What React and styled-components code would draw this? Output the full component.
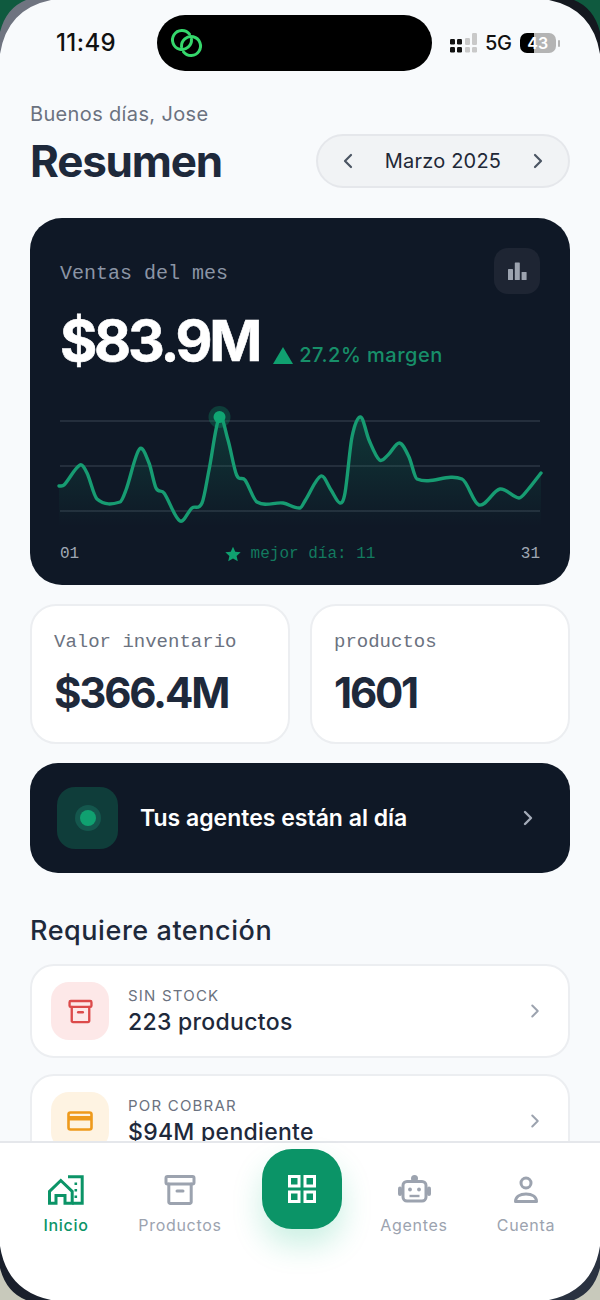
import React from 'react';
import styled, { createGlobalStyle } from 'styled-components';
import { ChevronLeft, ChevronRight } from 'lucide-react';

const SANS = '"Inter", "Liberation Sans", sans-serif';
const MONO = '"Liberation Mono", "DejaVu Sans Mono", monospace';

const GlobalStyle = createGlobalStyle`
  html, body {
    margin: 0;
    padding: 0;
    background: #f8fafc;
  }
  * {
    box-sizing: border-box;
  }
`;

const Phone = styled.div`
  position: relative;
  width: 600px;
  height: 1300px;
  overflow: hidden;
  display: flex;
  flex-direction: column;
  background: #f8fafc;
  font-family: ${SANS};
  color: #1e293b;
`;

const CornerSvg = styled.svg`
  position: absolute;
  width: 60px;
  height: 60px;
  z-index: 5;
  ${(p) => (p.$bottom ? 'bottom: 0;' : 'top: 0;')}
  ${(p) => (p.$right ? 'right: 0;' : 'left: 0;')}
  transform: scale(${(p) => (p.$right ? -1 : 1)}, ${(p) => (p.$bottom ? -1 : 1)});
`;

const Corner = ({ bottom, right, ring, outer }) => (
  <CornerSvg $bottom={bottom} $right={right} viewBox="0 0 60 60">
    <path d="M0 54 Q7 9 51 0 L0 0 Z" fill={ring} />
    <path d="M0 32 Q6 8 26 0 L0 0 Z" fill={outer} />
  </CornerSvg>
);

const StatusBar = styled.div`
  height: 86px;
  flex: none;
  padding: 15px 0 0 56px;
  display: flex;
  align-items: flex-start;
`;

const Time = styled.div`
  width: 101px;
  height: 56px;
  line-height: 56px;
  font-size: 24px;
  font-weight: 500;
  color: #111;
  letter-spacing: 0.4px;
`;

const Island = styled.div`
  width: 275px;
  height: 56px;
  border-radius: 28px;
  background: #000;
  display: flex;
  align-items: center;
  padding-left: 12px;
`;

const StatusIcons = styled.div`
  margin-left: 18px;
  height: 56px;
  display: flex;
  align-items: center;
  gap: 7px;
`;

const Network = styled.span`
  font-size: 20px;
  font-weight: 500;
  color: #111;
  letter-spacing: -0.3px;
`;

const Battery = styled.div`
  position: relative;
  width: 36px;
  height: 20px;
  border-radius: 7px;
  overflow: hidden;
  margin-left: 1px;
  background: linear-gradient(90deg, #000 0 40%, #b4b4b4 40% 100%);
  color: #fff;
  font-size: 16px;
  font-weight: 600;
  line-height: 20px;
  text-align: center;
`;

const BatteryTip = styled.div`
  width: 2px;
  height: 7px;
  border-radius: 1px;
  background: #b4b4b4;
  margin-left: -5px;
`;

const Main = styled.main`
  flex: 1;
  min-height: 0;
  overflow: hidden;
  padding: 16px 30px 0;
`;

const Header = styled.header`
  display: flex;
  justify-content: space-between;
  align-items: flex-end;
`;

const Greeting = styled.div`
  font-size: 20px;
  line-height: 24px;
  color: #6b7280;
  font-weight: 400;
  letter-spacing: 0.35px;
`;

const Title = styled.h1`
  margin: 8px 0 0;
  font-size: 44px;
  line-height: 54px;
  font-weight: 700;
  letter-spacing: -1.2px;
  color: #1e293b;
`;

const MonthPill = styled.div`
  width: 254px;
  height: 54px;
  border-radius: 27px;
  background: #f1f3f5;
  border: 2px solid #e5e7eb;
  display: flex;
  align-items: center;
  justify-content: space-between;
  padding: 0 18px;
  color: #4b5563;
`;

const MonthLabel = styled.span`
  font-size: 20px;
  font-weight: 400;
  letter-spacing: 0.2px;
  color: #1f2937;
`;

const Hero = styled.section`
  margin-top: 30px;
  height: 367px;
  border-radius: 32px;
  background: #0f1826;
  padding: 30px 30px 22px;
  display: flex;
  flex-direction: column;
`;

const HeroTop = styled.div`
  height: 46px;
  display: flex;
  justify-content: space-between;
  align-items: flex-start;
`;

const HeroLabel = styled.span`
  font-family: ${MONO};
  font-size: 20px;
  line-height: 52px;
  color: #8b95a5;
`;

const HeroIconBox = styled.div`
  width: 46px;
  height: 46px;
  border-radius: 14px;
  background: #1e2533;
  display: flex;
  align-items: center;
  justify-content: center;
`;

const HeroValueRow = styled.div`
  margin-top: 16px;
  height: 60px;
  display: flex;
  align-items: center;
`;

const HeroValue = styled.span`
  font-size: 57px;
  font-weight: 700;
  letter-spacing: -3.2px;
  color: #fff;
  -webkit-text-stroke: 0.6px #fff;
`;

const Margin = styled.span`
  margin-left: 14px;
  margin-top: 30px;
  font-size: 20px;
  font-weight: 500;
  letter-spacing: 0.5px;
  color: #178f69;
  display: flex;
  align-items: center;
  gap: 6px;
`;

const Chart = styled.svg`
  display: block;
  margin-top: 10px;
  overflow: visible;
  flex: none;
`;

const ChartFooter = styled.div`
  margin-top: 14px;
  display: flex;
  justify-content: space-between;
  align-items: center;
  font-family: ${MONO};
  font-size: 16px;
  line-height: 20px;
  color: #a0a8b4;
`;

const BestDay = styled.span`
  color: #137a5f;
  display: flex;
  align-items: center;
  gap: 10px;
`;

const Stats = styled.div`
  margin-top: 19px;
  display: grid;
  grid-template-columns: 1fr 1fr;
  gap: 20px;
`;

const StatCard = styled.div`
  height: 140px;
  border-radius: 26px;
  background: #fff;
  border: 2px solid #eceef1;
  padding: 25px 22px 0;
`;

const StatLabel = styled.div`
  font-family: ${MONO};
  font-size: 19px;
  line-height: 22px;
  color: #6b7280;
`;

const StatValue = styled.div`
  margin-top: 15px;
  font-size: 42px;
  line-height: 50px;
  font-weight: 700;
  letter-spacing: -2.2px;
  color: #1e293b;
`;

const AgentsBanner = styled.div`
  margin-top: 19px;
  height: 110px;
  border-radius: 28px;
  background: #0f1826;
  display: flex;
  align-items: center;
  padding: 0 30px 0 27px;
`;

const AgentsIcon = styled.div`
  width: 61px;
  height: 62px;
  border-radius: 18px;
  background: #0f3d3a;
  display: flex;
  align-items: center;
  justify-content: center;
`;

const AgentsDot = styled.div`
  width: 16px;
  height: 16px;
  border-radius: 50%;
  background: #10a070;
  box-shadow: 0 0 0 5px #14574d;
`;

const AgentsText = styled.span`
  flex: 1;
  margin-left: 22px;
  font-size: 23px;
  font-weight: 600;
  color: #fff;
`;

const SectionTitle = styled.h2`
  margin: 42px 0 0;
  font-size: 27px;
  line-height: 32px;
  font-weight: 500;
  letter-spacing: 0.55px;
  color: #1e293b;
`;

const AlertList = styled.div`
  margin-top: 17px;
  display: flex;
  flex-direction: column;
  gap: 16px;
`;

const AlertCard = styled.div`
  flex: none;
  height: 94px;
  border-radius: 24px;
  background: #fff;
  border: 2px solid #eceef1;
  display: flex;
  align-items: center;
  padding: 0 22px 0 19px;
`;

const AlertIcon = styled.div`
  width: 58px;
  height: 58px;
  border-radius: 18px;
  background: ${(p) => p.$bg};
  display: flex;
  align-items: center;
  justify-content: center;
`;

const AlertBody = styled.div`
  flex: 1;
  margin-left: 19px;
`;

const AlertKicker = styled.div`
  font-size: 15px;
  line-height: 20px;
  font-weight: 400;
  letter-spacing: 1.2px;
  color: #6b7280;
`;

const AlertText = styled.div`
  margin-top: 2px;
  font-size: 23px;
  line-height: 28px;
  font-weight: 500;
  letter-spacing: 0.3px;
  color: #1e293b;
`;

const Nav = styled.nav`
  flex: none;
  height: 159px;
  background: #fff;
  border-top: 2px solid #e5e7eb;
  display: grid;
  grid-template-columns: 132px 96px 148px 76px 148px;
  align-items: start;
  position: relative;
`;

const NavItem = styled.div`
  padding-top: 29px;
  display: flex;
  flex-direction: column;
  align-items: center;
  gap: 7px;
  white-space: nowrap;
  font-size: 16px;
  line-height: 20px;
  font-weight: ${(p) => (p.$active ? 500 : 400)};
  letter-spacing: 0.7px;
  color: ${(p) => (p.$active ? '#0b9467' : '#9ca3af')};
`;

const NavIconSlot = styled.div`
  height: 36px;
  display: flex;
  align-items: center;
  justify-content: center;
`;

const Fab = styled.div`
  justify-self: center;
  margin-top: 6px;
  width: 80px;
  height: 80px;
  border-radius: 30px;
  background: #0b9467;
  box-shadow: 0 16px 30px rgba(16, 185, 129, 0.22);
  display: flex;
  align-items: center;
  justify-content: center;
`;

const SALES = [
  [-1, 106], [4, 105], [20, 85], [27, 93], [37, 119], [60, 122], [66, 110], [79.5, 69],
  [89, 83], [96, 108], [104, 113], [120, 141], [132, 128], [142, 123], [149, 90], [159.4, 37],
  [168, 60], [176.6, 95], [185, 100], [197, 122], [223, 123], [240, 128], [245.5, 120], [261, 96],
  [271, 110], [280, 123], [285, 113], [292, 57], [300.6, 37], [309, 60], [319.5, 80], [328, 75],
  [339.5, 63], [349, 77], [357, 99], [402, 99], [419, 125], [440, 109], [459, 118], [467.6, 110],
  [481, 93],
];

const smoothPath = (pts) => {
  let d = `M${pts[0][0]} ${pts[0][1]}`;
  for (let i = 0; i < pts.length - 1; i++) {
    const p0 = pts[Math.max(i - 1, 0)];
    const p1 = pts[i];
    const p2 = pts[i + 1];
    const p3 = pts[Math.min(i + 2, pts.length - 1)];
    const dx = (p2[0] - p1[0]) / 3;
    const m1 = (p2[1] - p0[1]) / (p2[0] - p0[0]);
    const m2 = (p3[1] - p1[1]) / (p3[0] - p1[0]);
    d += ` C${p1[0] + dx} ${p1[1] + m1 * dx} ${p2[0] - dx} ${p2[1] - m2 * dx} ${p2[0]} ${p2[1]}`;
  }
  return d;
};

const LINE = smoothPath(SALES);
const AREA = `${LINE} L481 146 L-1 146 Z`;

const SalesChart = () => (
  <Chart width="480" height="150" viewBox="0 0 480 150">
    <defs>
      <linearGradient id="salesFill" x1="0" y1="0" x2="0" y2="1">
        <stop offset="0" stopColor="#10a070" stopOpacity="0.24" />
        <stop offset="1" stopColor="#10a070" stopOpacity="0" />
      </linearGradient>
    </defs>
    {[41, 86, 131].map((y) => (
      <line key={y} x1="0" x2="480" y1={y} y2={y} stroke="#2d3644" strokeWidth="1.4" />
    ))}
    <path d={AREA} fill="url(#salesFill)" />
    <path d={LINE} fill="none" stroke="#179c72" strokeWidth="3.4" strokeLinecap="round" />
    <circle cx="159.5" cy="37" r="11" fill="#10a070" opacity="0.28" />
    <circle cx="159.5" cy="37" r="6" fill="#10a572" />
  </Chart>
);

const LinkLogo = () => (
  <svg width="36" height="30" viewBox="0 0 36 30" fill="none" stroke="#35d86c" strokeWidth="3" strokeLinecap="round">
    <path d="M22.46 11.17 A9.5 9.5 0 1 1 20.49 6.15" />
    <path d="M12.54 18.83 A9.5 9.5 0 1 1 14.51 23.85" />
  </svg>
);

const SignalIcon = () => (
  <svg width="28" height="20" viewBox="0 0 28 20">
    <g fill="#111">
      <rect x="0" y="6" width="5" height="5.5" rx="1.2" />
      <rect x="7" y="6" width="5" height="5.5" rx="1.2" />
      <rect x="0" y="14" width="5" height="5.5" rx="1.2" />
      <rect x="7" y="14" width="5" height="5.5" rx="1.2" />
    </g>
    <g fill="#c9c9c9">
      <rect x="15" y="5" width="5" height="7" rx="1.2" />
      <rect x="15" y="14" width="5" height="5.5" rx="1.2" />
      <rect x="22" y="0" width="5" height="12" rx="1.2" />
      <rect x="22" y="14" width="5" height="5.5" rx="1.2" />
    </g>
  </svg>
);

const BarsIcon = () => (
  <svg width="20" height="20" viewBox="0 0 20 20" fill="#9ca3af">
    <rect x="1" y="8" width="5" height="11" rx="0.6" />
    <rect x="7.8" y="1.5" width="5" height="17.5" rx="0.6" />
    <rect x="14.6" y="11" width="5" height="8" rx="0.6" />
  </svg>
);

const BoxIcon = ({ size = 32, color }) => (
  <svg width={size} height={size} viewBox="0 0 32 32" fill="none" stroke={color} strokeWidth="3" strokeLinejoin="round" strokeLinecap="round">
    <rect x="2" y="2.5" width="28" height="7.5" rx="1.5" />
    <path d="M4.8 10 V28 a1.5 1.5 0 0 0 1.5 1.5 H25.7 a1.5 1.5 0 0 0 1.5 -1.5 V10" />
    <path d="M13 17 H19" />
  </svg>
);

const CardIcon = () => (
  <svg width="26" height="20" viewBox="0 0 26 20">
    <rect x="1.5" y="1.5" width="23" height="17" rx="2" fill="none" stroke="#ee9a1c" strokeWidth="2.6" />
    <rect x="1.5" y="5" width="23" height="4.5" fill="#ee9a1c" />
  </svg>
);

const HomeIcon = () => (
  <svg width="36" height="30" viewBox="0 0 36 30" fill="none" stroke="#0b9467" strokeWidth="3" strokeLinejoin="miter">
    <path d="M1.5 28.3 V16.5 L12.8 5.5 L24.2 16.5 V28.3 H17 V20.5 H8 V28.3 Z" />
    <path d="M20 1.8 H34.2 V28.3 H24.2" />
    <path d="M27.8 7.5 V10 M27.8 14 V16.5 M27.8 20.5 V23" strokeWidth="2.6" />
  </svg>
);

const GridIcon = () => (
  <svg width="28" height="28" viewBox="0 0 28 28" fill="none" stroke="#fff" strokeWidth="3">
    <rect x="1.5" y="1.5" width="9.5" height="9.5" />
    <rect x="17" y="1.5" width="9.5" height="9.5" />
    <rect x="1.5" y="17" width="9.5" height="9.5" />
    <rect x="17" y="17" width="9.5" height="9.5" />
  </svg>
);

const RobotIcon = () => (
  <svg width="36" height="36" viewBox="0 0 36 36" fill="none" stroke="#9ca3af" strokeWidth="3">
    <circle cx="18.5" cy="6.5" r="3.5" fill="#9ca3af" stroke="none" />
    <rect x="7" y="9.5" width="23" height="19.5" rx="4" />
    <rect x="2" y="14.5" width="4" height="9.5" rx="2" fill="#9ca3af" stroke="none" />
    <rect x="31" y="14.5" width="4" height="9.5" rx="2" fill="#9ca3af" stroke="none" />
    <circle cx="14" cy="17.5" r="1.9" fill="#9ca3af" stroke="none" />
    <circle cx="23" cy="17.5" r="1.9" fill="#9ca3af" stroke="none" />
    <path d="M13.5 24 H23.5" strokeWidth="2.4" />
  </svg>
);

const PersonIcon = () => (
  <svg width="32" height="32" viewBox="0 0 32 32" fill="none" stroke="#9ca3af" strokeWidth="3">
    <circle cx="16" cy="9" r="5" />
    <path d="M5.5 27.5 C5.5 22.5 10 20 16 20 C22 20 26.5 22.5 26.5 27.5 Z" strokeLinejoin="round" />
  </svg>
);

const STATS = [
  { label: 'Valor inventario', value: '$366.4M' },
  { label: 'productos', value: '1601' },
];

export default function App() {
  return (
    <Phone>
      <GlobalStyle />
      <Corner ring="#6f7480" outer="#0f5a3f" />
      <Corner right ring="#14181f" outer="#0f5a3f" />
      <Corner bottom ring="#1a202c" outer="#c8c9bb" />
      <Corner bottom right ring="#2a3240" outer="#c8c9bb" />

      <StatusBar>
        <Time>11:49</Time>
        <Island>
          <LinkLogo />
        </Island>
        <StatusIcons>
          <SignalIcon />
          <Network>5G</Network>
          <Battery>43</Battery>
          <BatteryTip />
        </StatusIcons>
      </StatusBar>

      <Main>
        <Header>
          <div>
            <Greeting>Buenos días, Jose</Greeting>
            <Title>Resumen</Title>
          </div>
          <MonthPill>
            <ChevronLeft size={24} strokeWidth={2.2} />
            <MonthLabel>Marzo 2025</MonthLabel>
            <ChevronRight size={24} strokeWidth={2.2} />
          </MonthPill>
        </Header>

        <Hero>
          <HeroTop>
            <HeroLabel>Ventas del mes</HeroLabel>
            <HeroIconBox>
              <BarsIcon />
            </HeroIconBox>
          </HeroTop>
          <HeroValueRow>
            <HeroValue>$83.9M</HeroValue>
            <Margin>
              <svg width="20" height="17" viewBox="0 0 20 17">
                <path d="M10 0 L20 17 H0 Z" fill="#10a070" />
              </svg>
              27.2% margen
            </Margin>
          </HeroValueRow>
          <SalesChart />
          <ChartFooter>
            <span>01</span>
            <BestDay>
              <svg width="16" height="16" viewBox="0 0 24 24">
                <path d="M12 1 L15.4 8.6 L23.5 9.4 L17.4 14.9 L19.2 23 L12 18.8 L4.8 23 L6.6 14.9 L0.5 9.4 L8.6 8.6 Z" fill="#10a070" />
              </svg>
              mejor día: 11
            </BestDay>
            <span>31</span>
          </ChartFooter>
        </Hero>

        <Stats>
          {STATS.map((s) => (
            <StatCard key={s.label}>
              <StatLabel>{s.label}</StatLabel>
              <StatValue>{s.value}</StatValue>
            </StatCard>
          ))}
        </Stats>

        <AgentsBanner>
          <AgentsIcon>
            <AgentsDot />
          </AgentsIcon>
          <AgentsText>Tus agentes están al día</AgentsText>
          <ChevronRight size={24} strokeWidth={2.4} color="#a3abb8" />
        </AgentsBanner>

        <SectionTitle>Requiere atención</SectionTitle>
        <AlertList>
          <AlertCard>
            <AlertIcon $bg="#fde8e8">
              <BoxIcon size={25} color="#dc4a4a" />
            </AlertIcon>
            <AlertBody>
              <AlertKicker>SIN STOCK</AlertKicker>
              <AlertText>223 productos</AlertText>
            </AlertBody>
            <ChevronRight size={22} strokeWidth={2.2} color="#9ca3af" />
          </AlertCard>
          <AlertCard>
            <AlertIcon $bg="#fef3e2">
              <CardIcon />
            </AlertIcon>
            <AlertBody>
              <AlertKicker>POR COBRAR</AlertKicker>
              <AlertText>$94M pendiente</AlertText>
            </AlertBody>
            <ChevronRight size={22} strokeWidth={2.2} color="#9ca3af" />
          </AlertCard>
        </AlertList>
      </Main>

      <Nav>
        <NavItem $active>
          <NavIconSlot><HomeIcon /></NavIconSlot>
          Inicio
        </NavItem>
        <NavItem>
          <NavIconSlot><BoxIcon color="#9ca3af" /></NavIconSlot>
          Productos
        </NavItem>
        <Fab><GridIcon /></Fab>
        <NavItem>
          <NavIconSlot><RobotIcon /></NavIconSlot>
          Agentes
        </NavItem>
        <NavItem>
          <NavIconSlot><PersonIcon /></NavIconSlot>
          Cuenta
        </NavItem>
      </Nav>
    </Phone>
  );
}
